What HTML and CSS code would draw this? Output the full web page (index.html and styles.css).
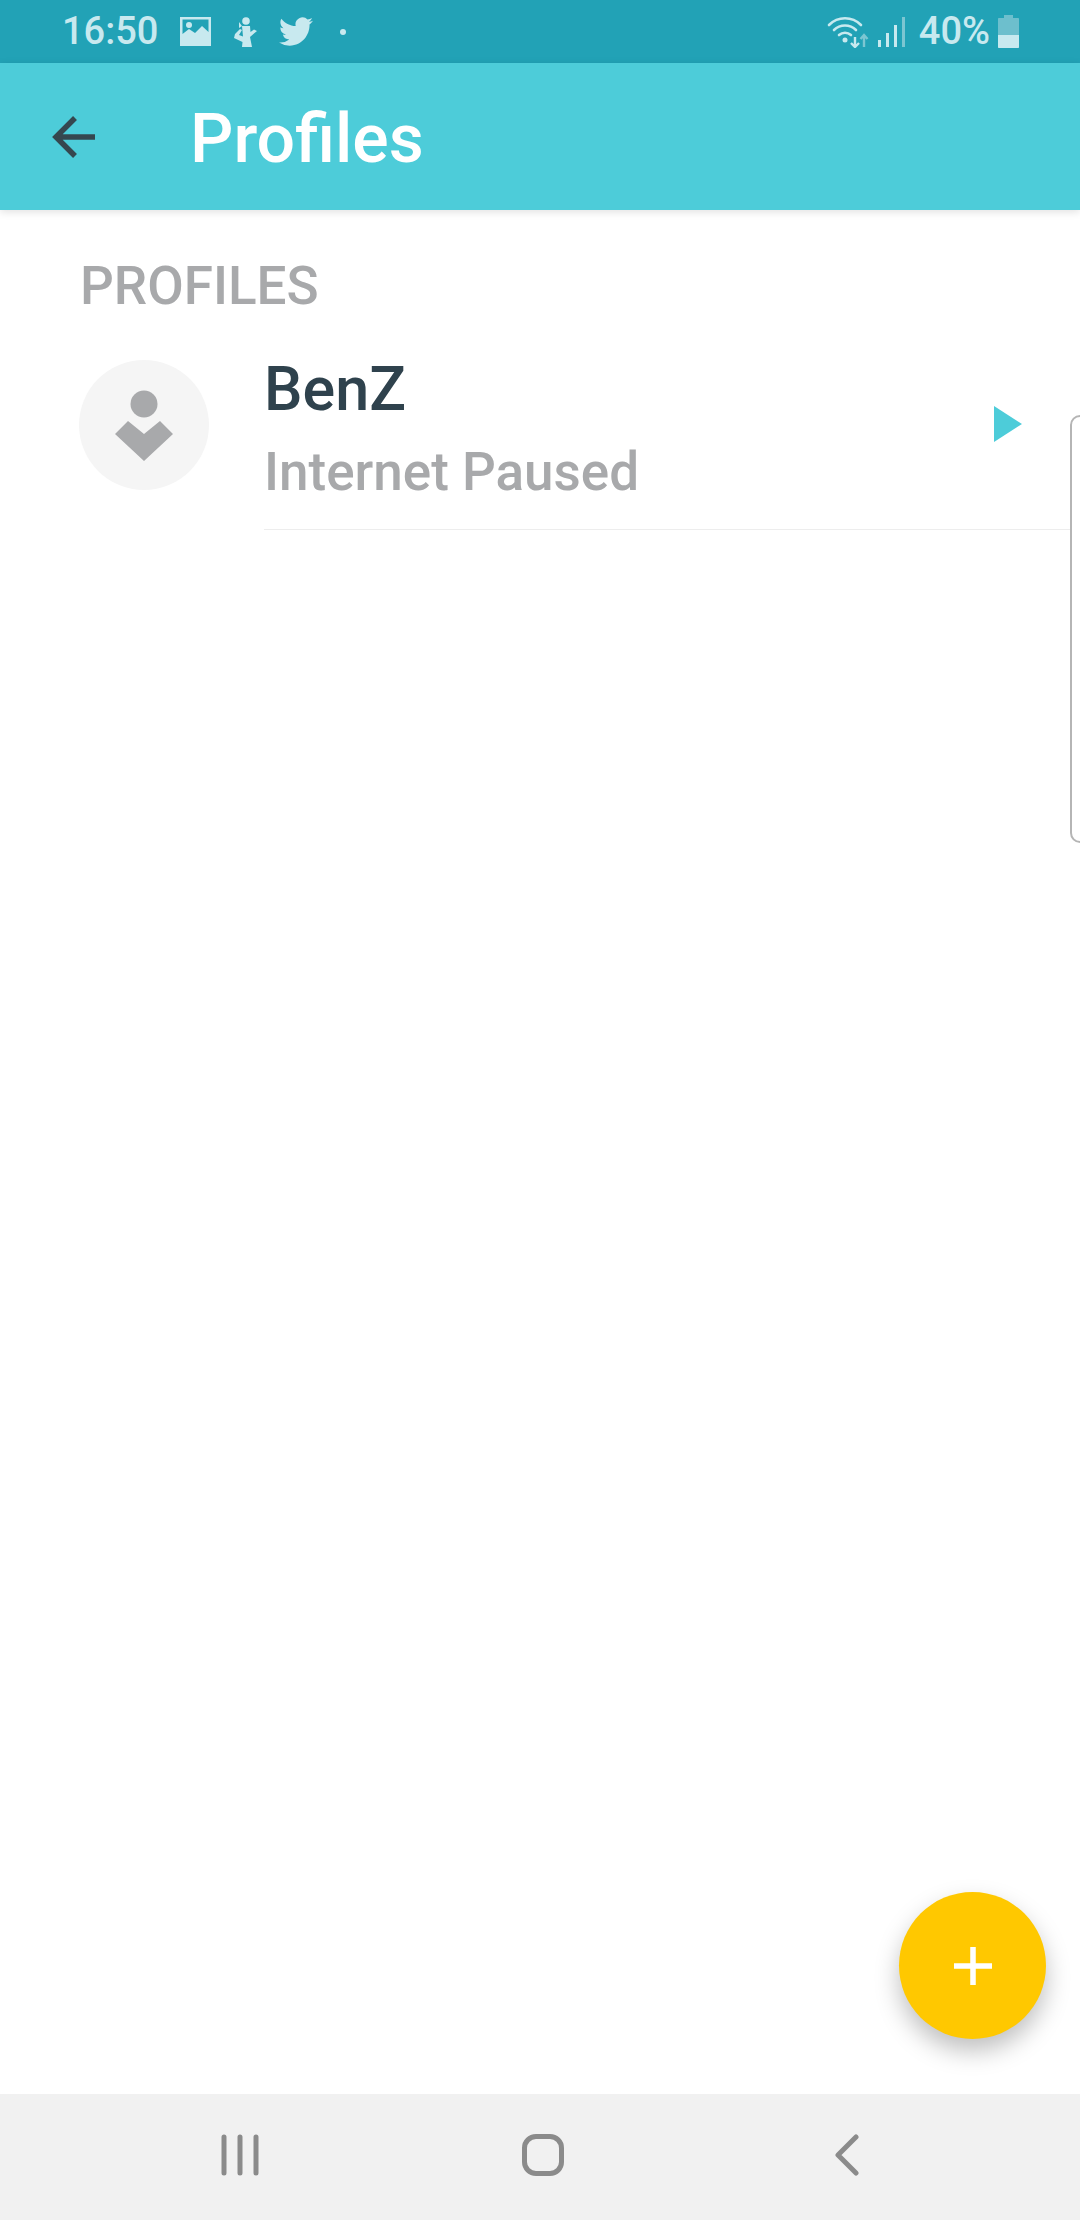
FILE: index.html
```html
<!DOCTYPE html>
<html lang="en">
<head>
    <meta charset="UTF-8">
    <meta name="viewport" content="width=device-width, initial-scale=1.0">
    <title>Profiles</title>
    <link rel="stylesheet" href="styles.css">
</head>
<body>
    <div class="status-bar">
        <div class="status-left">
            <span class="clock">16:50</span>
            <svg class="icon-gallery" width="31" height="29" viewBox="0 0 31 29">
                <path fill-rule="evenodd" d="M0 0H31V29H0ZM2.5 2.5V17L9 12L15 16L22 9L28.5 15V2.5Z" fill="#c8e9ef"/>
                <circle cx="9" cy="8" r="3" fill="#c8e9ef"/>
            </svg>
            <svg class="icon-runner" width="24" height="30" viewBox="0 0 24 30">
                <circle cx="13" cy="4" r="3.800" fill="#c8e9ef"/>
                <path d="M6 5L9 9L6 11Z" fill="#c8e9ef"/>
                <path d="M9 9H17L17.500 15L21 12.500L24 14L17 20L19 30H9L9.500 25L1 21L2 17L7 12L9 13L6 18L10 19.500Z" fill="#c8e9ef"/>
            </svg>
            <svg class="icon-twitter" width="34" height="29" viewBox="0 2 24 20" preserveAspectRatio="none">
                <path d="M23.953 4.57a10 10 0 01-2.825.775 4.958 4.958 0 002.163-2.723c-.951.555-2.005.959-3.127 1.184a4.92 4.92 0 00-8.384 4.482C7.69 8.095 4.067 6.13 1.64 3.162a4.822 4.822 0 00-.666 2.475c0 1.71.87 3.213 2.188 4.096a4.904 4.904 0 01-2.228-.616v.06a4.923 4.923 0 003.946 4.827 4.996 4.996 0 01-2.212.085 4.936 4.936 0 004.604 3.417 9.867 9.867 0 01-6.102 2.105c-.39 0-.779-.023-1.17-.067a13.995 13.995 0 007.557 2.209c9.053 0 13.998-7.496 13.998-13.985 0-.21 0-.42-.015-.63A9.935 9.935 0 0024 4.59z" fill="#c8e9ef"/>
            </svg>
            <span class="status-dot"></span>
        </div>
        <div class="status-right">
            <svg class="icon-wifi" width="42" height="32" viewBox="0 0 42 32">
                <path d="M2 9C11 0 25 0 34 9" fill="none" stroke="#c8e9ef" stroke-width="2.600" stroke-linecap="round"/>
                <path d="M7 14C13 8 23 8 29 14" fill="none" stroke="#c8e9ef" stroke-width="2.600" stroke-linecap="round"/>
                <path d="M12 19C15.500 16 20.500 16 24 19" fill="none" stroke="#c8e9ef" stroke-width="2.600" stroke-linecap="round"/>
                <circle cx="18" cy="24" r="2.500" fill="#c8e9ef"/>
                <path d="M28 21V31M24 27L28 31L32 27" fill="none" stroke="#c8e9ef" stroke-width="2.400"/>
                <path d="M37 31V19M33.500 23L37 19L40.500 23" fill="none" stroke="#7cc6d2" stroke-width="2.400"/>
            </svg>
            <svg class="icon-signal" width="28" height="32" viewBox="0 0 28 32">
                <rect x="0" y="24" width="3" height="7" fill="#c8e9ef"/>
                <rect x="8" y="17" width="3" height="14" fill="#c8e9ef"/>
                <rect x="16" y="9" width="3" height="22" fill="#c8e9ef"/>
                <rect x="24" y="1" width="3" height="30" fill="#7cc6d2"/>
            </svg>
            <span class="battery-text">40%</span>
            <svg class="icon-battery" width="21" height="33" viewBox="0 0 21 33">
                <path d="M6 0H15V3H20C20.600 3 21 3.400 21 4V20H0V4C0 3.400 .4 3 1 3H6Z" fill="#6dbfcd"/>
                <path d="M0 20H21V32C21 32.600 20.600 33 20 33H1C.4 33 0 32.600 0 32Z" fill="#c8e9ef"/>
            </svg>
        </div>
    </div>

    <div class="app-bar">
        <svg class="icon-back" width="44" height="44" viewBox="0 0 44 44">
            <path d="M43 22H5M23 3L4 22L23 41" fill="none" stroke="#35474f" stroke-width="5.500"/>
        </svg>
        <h1 class="app-title">Profiles</h1>
    </div>

    <div class="content">
        <div class="section-label">PROFILES</div>
        <div class="profile-row">
            <div class="avatar">
                <svg width="58" height="72" viewBox="0 0 58 72">
                    <ellipse cx="29" cy="14" rx="13.500" ry="13.500" fill="#a8a9ab"/>
                    <path d="M0 44L13 31L29 44L45 31L58 44L29 71Z" fill="#a8a9ab"/>
                </svg>
            </div>
            <div class="profile-info">
                <div class="profile-name">BenZ</div>
                <div class="profile-status">Internet Paused</div>
            </div>
            <svg class="icon-play" width="28" height="36" viewBox="0 0 28 36">
                <path d="M0 0L28 18L0 36Z" fill="#4dccd9"/>
            </svg>
        </div>
        <div class="edge-panel"></div>
        <button class="fab">
            <svg width="38" height="38" viewBox="0 0 38 38">
                <path d="M19 0V38M0 19H38" stroke="#fff" stroke-width="5.500"/>
            </svg>
        </button>
    </div>

    <div class="nav-bar">
        <svg class="nav-recents" width="40" height="42" viewBox="0 0 40 42">
            <path d="M4 3V39M20 3V39M36 3V39" stroke="#8b8b8b" stroke-width="5" stroke-linecap="round"/>
        </svg>
        <div class="nav-home"></div>
        <svg class="nav-back" width="25" height="42" viewBox="0 0 25 42">
            <path d="M22 3L4 21L22 39" fill="none" stroke="#8b8b8b" stroke-width="5" stroke-linecap="round" stroke-linejoin="round"/>
        </svg>
    </div>
</body>
</html>
```

FILE: styles.css
```css
* {
    box-sizing: border-box;
}

body {
    margin: 0;
    height: 2220px;
    display: flex;
    flex-direction: column;
    overflow: hidden;
    background-color: #fff;
    font-family: Roboto, "Liberation Sans", sans-serif;
}

/* Status bar */
.status-bar {
    height: 63px;
    flex-shrink: 0;
    display: flex;
    justify-content: space-between;
    align-items: center;
    padding: 0 61px 0 62px;
    background-color: #22a2b6;
    color: #c8e9ef;
}

.status-left,
.status-right {
    display: flex;
    align-items: center;
}

.clock {
    font-size: 38px;
    font-weight: 500;
    line-height: 63px;
    margin-right: 22px;
}

.icon-runner {
    margin-left: 22px;
}

.icon-twitter {
    margin-left: 22px;
}

.status-dot {
    width: 6px;
    height: 6px;
    margin-left: 27px;
    border-radius: 50%;
    background-color: #c8e9ef;
}

.icon-signal {
    margin-left: 9px;
}

.battery-text {
    font-size: 38px;
    font-weight: 500;
    line-height: 63px;
    margin-left: 13px;
}

.icon-battery {
    margin-left: 8px;
}

/* App bar */
.app-bar {
    height: 147px;
    flex-shrink: 0;
    display: flex;
    align-items: center;
    padding-left: 52px;
    background-color: #4dccd9;
    box-shadow: 0 2px 8px rgba(0, 0, 0, 0.12);
    position: relative;
    z-index: 1;
}

.app-title {
    margin: 5px 0 0 94px;
    font-size: 68px;
    font-weight: 500;
    color: #fff;
}

/* List */
.content {
    flex: 1;
    position: relative;
    padding-top: 51px;
}

.section-label {
    margin-left: 80px;
    font-size: 53px;
    font-weight: 500;
    line-height: 50px;
    color: #a8a9ab;
}

.profile-row {
    display: flex;
    margin-top: 49px;
    padding-left: 79px;
    position: relative;
}

.avatar {
    width: 130px;
    height: 130px;
    flex-shrink: 0;
    display: flex;
    align-items: center;
    justify-content: center;
    padding-top: 2px;
    border-radius: 50%;
    background-color: #f5f5f5;
}

.profile-info {
    flex: 1;
    margin-left: 55px;
    height: 170px;
    border-bottom: 1px solid #ededed;
}

.profile-name {
    font-size: 61px;
    line-height: 58px;
    font-weight: 500;
    color: #2f424d;
}

.profile-status {
    margin-top: 25px;
    font-size: 53px;
    font-weight: 500;
    line-height: 58px;
    color: #a8a9ab;
}

.icon-play {
    position: absolute;
    left: 994px;
    top: 46px;
}

.edge-panel {
    position: absolute;
    left: 1070px;
    top: 205px;
    width: 20px;
    height: 428px;
    border: 2px solid #b5b5b5;
    border-radius: 14px;
    background-color: #fff;
}

.fab {
    position: absolute;
    left: 899px;
    top: 1682px;
    width: 147px;
    height: 147px;
    display: flex;
    align-items: center;
    justify-content: center;
    padding: 0;
    border: none;
    border-radius: 50%;
    background-color: #ffc800;
    box-shadow: 0 12px 24px rgba(0, 0, 0, 0.25);
}

/* Bottom navigation */
.nav-bar {
    height: 126px;
    flex-shrink: 0;
    display: flex;
    align-items: center;
    padding-bottom: 4px;
    padding-left: 220px;
    background-color: #f1f1f1;
}

.nav-home {
    width: 42px;
    height: 42px;
    margin-left: 262px;
    border: 5px solid #8b8b8b;
    border-radius: 14px;
}

.nav-back {
    margin-left: 270px;
}
```
